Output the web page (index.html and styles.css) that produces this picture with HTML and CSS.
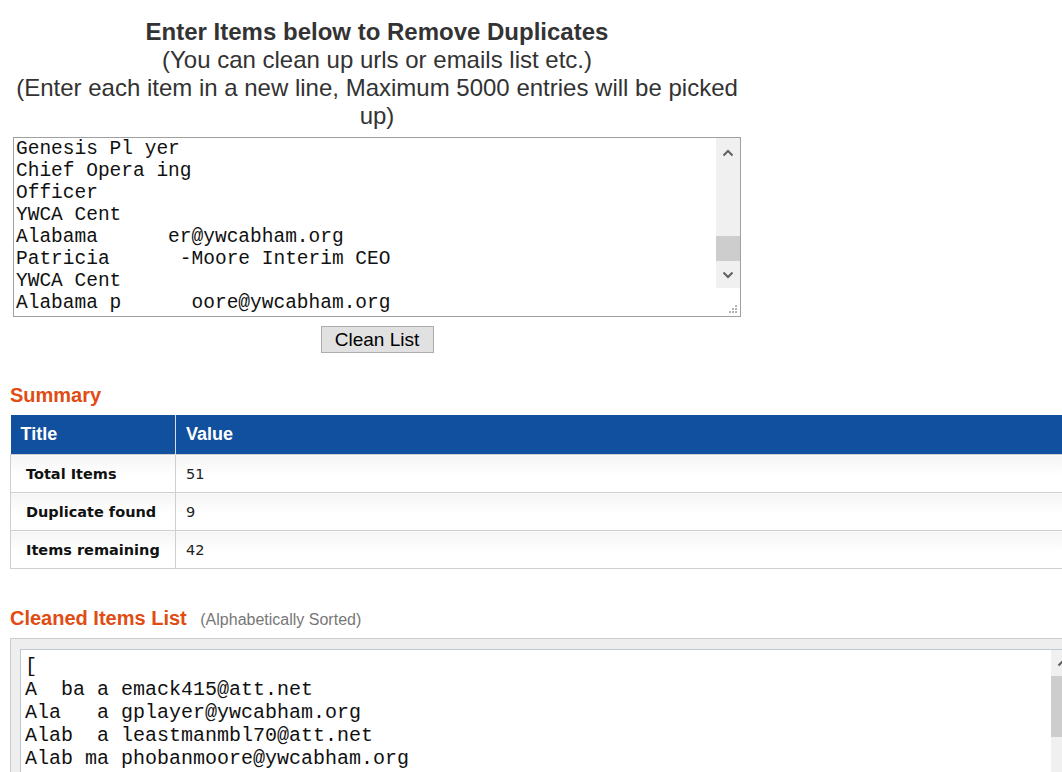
FILE: index.html
```html
<!DOCTYPE html>
<html lang="en">
<head>
    <meta charset="UTF-8">
    <meta name="viewport" content="width=device-width, initial-scale=1.0">
    <title>Remove Duplicates</title>
    <link rel="stylesheet" href="styles.css">
</head>

<body>
<div class="page">
    <div class="intro">
        <h1 class="intro_title">Enter Items below to Remove Duplicates</h1>
        <p class="intro_note">(You can clean up urls or emails list etc.)</p>
        <p class="intro_note">(Enter each item in a new line, Maximum 5000 entries will be picked up)</p>
    </div>

    <form class="entry" onsubmit="return false;">
        <div class="entry_box">
            <textarea class="entry_input" spellcheck="false">Genesis Pl yer
Chief Opera ing
Officer
YWCA Cent
Alabama      er@ywcabham.org
Patricia      -Moore Interim CEO
YWCA Cent
Alabama p      oore@ywcabham.org</textarea>
            <!-- 滚动条（自己画的） -->
            <div class="bar">
                <div class="bar_track">
                    <div class="bar_btn bar_up">
                        <svg width="12" height="8" viewBox="0 0 12 8"><polyline points="1.5,6.5 6,2 10.5,6.5" fill="none" stroke="#606060" stroke-width="2"/></svg>
                    </div>
                    <div class="bar_space"></div>
                    <div class="bar_thumb"></div>
                    <div class="bar_btn bar_down">
                        <svg width="12" height="8" viewBox="0 0 12 8"><polyline points="1.5,1.5 6,6 10.5,1.5" fill="none" stroke="#606060" stroke-width="2"/></svg>
                    </div>
                </div>
                <div class="bar_corner">
                    <svg width="9" height="9" viewBox="0 0 9 9" fill="#b4b4b4">
                        <rect x="6" y="0" width="2" height="2"/>
                        <rect x="3" y="3" width="2" height="2"/><rect x="6" y="3" width="2" height="2"/>
                        <rect x="0" y="6" width="2" height="2"/><rect x="3" y="6" width="2" height="2"/><rect x="6" y="6" width="2" height="2"/>
                    </svg>
                </div>
            </div>
        </div>
        <button class="clean_btn" type="submit">Clean List</button>
    </form>

    <h2 class="section_title">Summary</h2>
    <table class="summary">
        <tr><th class="col_title">Title</th><th>Value</th></tr>
        <tr><td class="col_title">Total Items</td><td>51</td></tr>
        <tr><td class="col_title">Duplicate found</td><td>9</td></tr>
        <tr><td class="col_title">Items remaining</td><td>42</td></tr>
    </table>

    <h2 class="section_title result_title">Cleaned Items List <span class="result_hint">(Alphabetically Sorted)</span></h2>
    <div class="result">
        <div class="result_box">
            <textarea class="result_output" spellcheck="false" readonly>[
A  ba a emack415@att.net
Ala   a gplayer@ywcabham.org
Alab  a leastmanmbl70@att.net
Alab ma phobanmoore@ywcabham.org
Alabama tbrown@ywcabham.org
Alabama ywca@ywcabham.org</textarea>
            <div class="bar result_bar">
                <div class="bar_track">
                    <div class="bar_btn result_up">
                        <svg width="12" height="8" viewBox="0 0 12 8"><polyline points="1.5,6.5 6,2 10.5,6.5" fill="none" stroke="#606060" stroke-width="2"/></svg>
                    </div>
                    <div class="result_thumb"></div>
                    <div class="bar_space"></div>
                </div>
            </div>
        </div>
    </div>
</div>
</body>
</html>
```

FILE: styles.css
```css
/* 页面比窗口宽，右边被截掉 */
html, body {
    overflow: hidden;
}
body {
    margin: 0;
    background: #fff;
    color: #333;
    font-family: "Liberation Sans", Arial, sans-serif;
}
.page {
    width: 1076px;
    padding: 0 10px;
}

/* 顶部说明 */
.intro {
    width: 728px;
    margin-left: 3px;
    padding-top: 18px;
    text-align: center;
}
.intro_title, .intro_note {
    margin: 0;
    font-size: 24px;
    line-height: 28px;
}
.intro_title {
    font-weight: bold;
}
.intro_note {
    font-weight: normal;
}

/* 输入框 */
.entry {
    width: 728px;
    margin: 7px 0 0 3px;
}
.entry_box {
    display: flex;
    height: 180px;
    box-sizing: border-box;
    border: 1px solid #a0a0a0;
    background: #fff;
}
.entry_input {
    flex: 1;
    min-width: 0;
    margin: 0;
    padding: 0 2px;
    border: none;
    outline: none;
    resize: none;
    overflow: hidden;
    font-family: "Liberation Mono", "Courier New", monospace;
    font-size: 19.5px;
    line-height: 22px;
    color: #111;
}

/* 滚动条 */
.bar {
    width: 24px;
    display: flex;
    flex-direction: column;
}
.bar_track {
    flex: 1;
    display: flex;
    flex-direction: column;
    background: #f0f0f0;
}
.bar_btn {
    display: flex;
    align-items: center;
    justify-content: center;
}
.bar_up {
    height: 30px;
}
.bar_down {
    height: 27px;
}
.bar_space {
    flex: 1;
}
.bar_thumb {
    height: 25px;
    background: #cdcdcd;
}
.bar_corner {
    height: 26px;
    background: #fff;
    display: flex;
    align-items: flex-end;
    justify-content: flex-end;
    padding: 0 2px 2px 0;
}

.clean_btn {
    display: block;
    width: 113px;
    height: 27px;
    margin: 9px auto 0;
    padding: 0;
    background: #e1e1e1;
    border: 1px solid #adadad;
    border-radius: 0;
    color: #000;
    font-family: "Liberation Sans", Arial, sans-serif;
    font-size: 19px;
}

/* 小标题 */
.section_title {
    margin: 31px 0 8px;
    color: #e04c14;
    font-size: 20px;
    line-height: 23px;
    font-weight: bold;
}
.result_title {
    margin-top: 38px;
    margin-bottom: 7px;
}
.result_hint {
    margin-left: 8px;
    color: #777;
    font-size: 16px;
    font-weight: normal;
}

/* 统计表 */
.summary {
    width: 100%;
    border-collapse: collapse;
}
.summary th {
    height: 39px;
    padding: 0 10px;
    background: #11509e;
    color: #fff;
    font-size: 18px;
    text-align: left;
    border-left: 1px solid #d8dde6;
}
.summary th:first-child {
    border-left: none;
}
.summary td {
    height: 37px;
    padding: 0 10px;
    border: 1px solid #cfcfcf;
    background: linear-gradient(#f5f5f5, #fff 55%);
    color: #222;
    font-family: "DejaVu Sans", Verdana, sans-serif;
    font-size: 14.5px;
}
.summary th.col_title {
    width: 144px;
}
.summary td.col_title {
    width: 139px;
    padding-left: 15px;
    font-weight: bold;
    color: #111;
}

/* 结果框 */
.result {
    padding: 10px 9px 0;
    background: #eee;
    border: 1px solid #ccc;
}
.result_box {
    display: flex;
    height: 200px;
    border: 1px solid #bfc8d2;
    background: #fff;
}
.result_output {
    flex: 1;
    min-width: 0;
    margin: 0;
    padding: 5px 4px;
    border: none;
    outline: none;
    resize: none;
    overflow: hidden;
    font-family: "Liberation Mono", "Courier New", monospace;
    font-size: 20px;
    line-height: 23px;
    color: #111;
}
.result_up {
    height: 26px;
}
.result_thumb {
    height: 61px;
    background: #cdcdcd;
}
```
